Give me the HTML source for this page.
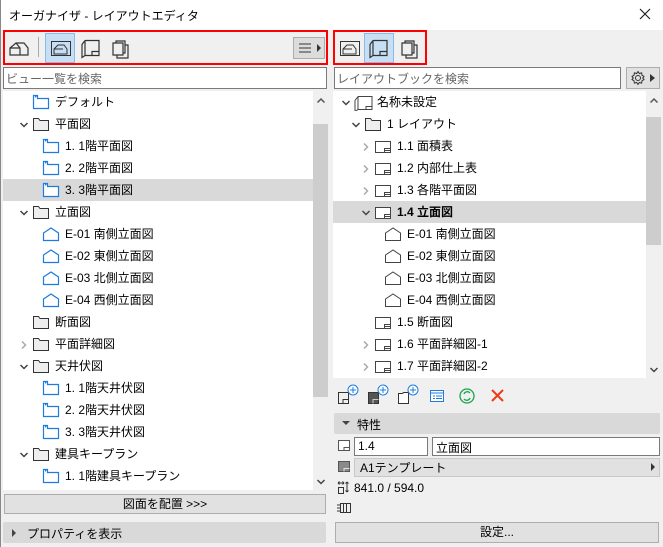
<!DOCTYPE html>
<html><head><meta charset="utf-8"><style>
*{box-sizing:border-box;margin:0;padding:0}
body{width:663px;height:547px;overflow:hidden;background:#f0f0f0;font-family:"Liberation Sans","Noto Sans CJK JP",sans-serif;font-size:12px;color:#000;position:relative}
.a{position:absolute}
.r{position:absolute;height:22px;line-height:22px;white-space:nowrap}
.r svg{position:absolute;top:3px}
.r span{position:absolute}
.sel{background:#d9d9d9}
.box{background:#fff;border:1px solid #7a7a7a}
.btn{background:#e1e1e1;border:1px solid #adadad;text-align:center}
</style></head><body>
<svg width="0" height="0" style="position:absolute">
<defs>
<symbol id="vw" viewBox="0 0 18 16"><path d="M1.5 1.5h4v3h11v10h-15z" fill="#fff" stroke="#1e7be0" stroke-width="1.2"/><path d="M3.5 3.5v-1h1" fill="none" stroke="#1e7be0" stroke-width="1"/></symbol>
<symbol id="fd" viewBox="0 0 18 16"><path d="M1.5 2.5h5l1.5 2h8.5v10h-15z" fill="#eee" stroke="#333" stroke-width="1"/></symbol>
<symbol id="el" viewBox="0 0 18 16"><path d="M1.5 7l7.5-5 7.5 5v7.5h-15z" fill="#fff" stroke="#1e7be0" stroke-width="1.2"/></symbol>
<symbol id="elg" viewBox="0 0 18 16"><path d="M1.5 7l7.5-5 7.5 5v7.5h-15z" fill="#fff" stroke="#444" stroke-width="1"/></symbol>
<symbol id="ly" viewBox="0 0 18 16"><rect x="1.5" y="3.5" width="15" height="11" fill="#fff" stroke="#444"/><path d="M10.5 14.5v-4h6M11 12.5h5" fill="none" stroke="#444"/></symbol>
<symbol id="dn" viewBox="0 0 10 10"><path d="M1.5 3l3.5 3.5 3.5-3.5" fill="none" stroke="#444" stroke-width="1.5"/></symbol>
<symbol id="rt" viewBox="0 0 10 10"><path d="M3 1.5l3.5 3.5-3.5 3.5" fill="none" stroke="#aaa" stroke-width="1.5"/></symbol>
<symbol id="up" viewBox="0 0 10 10"><path d="M1.5 6.5l3.5-3.5 3.5 3.5" fill="none" stroke="#555" stroke-width="1.5"/></symbol>
</defs></svg>

<!-- title -->
<div class="a" style="left:0;top:0;width:663px;height:30px;background:#fff"></div>
<div class="a" style="left:9px;top:7px;font-size:12px">オーガナイザ - レイアウトエディタ</div>
<svg class="a" style="left:639px;top:8px" width="12" height="12"><path d="M1 1l10 10M11 1L1 11" stroke="#222" stroke-width="1.2"/></svg>
<div class="a" style="left:0;top:0;width:1px;height:547px;background:#888"></div>

<!-- toolbars -->
<div class="a" style="left:3px;top:30px;width:325px;height:35px;border:2px solid #f00"></div>
<svg class="a" style="left:8px;top:38px" width="22" height="20"><path d="M2 17V10l6-5h8l4 5v7zM8 5l4 5v7M2 10h10" fill="none" stroke="#333" stroke-width="1.2"/></svg>
<div class="a" style="left:38px;top:37px;width:1px;height:20px;background:#aaa"></div>
<div class="a" style="left:45px;top:33px;width:30px;height:30px;background:#c6dff5;border:1px solid #8bbbe4"></div>
<svg class="a" style="left:50px;top:38px" width="22" height="20"><rect x="1.5" y="3.5" width="19" height="14" fill="none" stroke="#333"/><path d="M4 16V11l4-4h6l3 4v5zM4 11h9" fill="none" stroke="#333"/></svg>
<svg class="a" style="left:80px;top:37px" width="22" height="22"><path d="M5 3.5h14v15H5M5 3.5l-3 4v13l3-2M5 3.5v15M12 18.5v-4h7" fill="none" stroke="#333" stroke-width="1.2"/></svg>
<svg class="a" style="left:110px;top:37px" width="22" height="22"><path d="M3 4h10v12H3zM6 4V2h9v12h-2M15 6h3v13H7v-3" fill="none" stroke="#333" stroke-width="1.2" transform="translate(0,2)"/></svg>
<div class="a btn" style="left:293px;top:37px;width:32px;height:22px;background:#dcdcdc"></div>
<svg class="a" style="left:299px;top:42px" width="24" height="12"><path d="M0 2h12M0 6h12M0 10h12" stroke="#333"/><path d="M18 2l4 4-4 4z" fill="#333"/></svg>

<div class="a" style="left:333px;top:30px;width:94px;height:35px;border:2px solid #f00"></div>
<svg class="a" style="left:339px;top:38px" width="22" height="20"><rect x="1.5" y="3.5" width="19" height="14" fill="none" stroke="#333"/><path d="M4 16V11l4-4h6l3 4v5zM4 11h9" fill="none" stroke="#333"/></svg>
<div class="a" style="left:364px;top:33px;width:30px;height:30px;background:#c6dff5;border:1px solid #8bbbe4"></div>
<svg class="a" style="left:368px;top:37px" width="22" height="22"><path d="M5 3.5h14v15H5M5 3.5l-3 4v13l3-2M5 3.5v15M12 18.5v-4h7" fill="none" stroke="#333" stroke-width="1.2"/></svg>
<svg class="a" style="left:399px;top:37px" width="22" height="22"><path d="M3 4h10v12H3zM6 4V2h9v12h-2M15 6h3v13H7v-3" fill="none" stroke="#333" stroke-width="1.2" transform="translate(0,2)"/></svg>

<!-- search -->
<div class="a box" style="left:3px;top:67px;width:324px;height:22px"></div>
<div class="a" style="left:6px;top:70px;color:#666">ビュー一覧を検索</div>
<div class="a box" style="left:334px;top:67px;width:287px;height:22px"></div>
<div class="a" style="left:337px;top:70px;color:#666">レイアウトブックを検索</div>
<div class="a btn" style="left:626px;top:67px;width:34px;height:22px"></div>
<svg class="a" style="left:630px;top:70px" width="16" height="16"><circle cx="8" cy="8" r="2.5" fill="none" stroke="#333"/><path d="M8 1.5l1.3 2 2.3-.6.4 2.3 2 1.3-1.3 1.5 1.3 1.5-2 1.3-.4 2.3-2.3-.6L8 14.5l-1.3-2-2.3.6-.4-2.3-2-1.3L3.3 8 2 6.5l2-1.3.4-2.3 2.3.6z" fill="none" stroke="#333"/></svg>
<svg class="a" style="left:650px;top:74px" width="6" height="8"><path d="M0 0l5 4-5 4z" fill="#333"/></svg>

<!-- left tree -->
<div class="a" style="left:3px;top:91px;width:325px;height:399px;background:#fff"></div>
<div class="a" style="left:313px;top:91px;width:15px;height:399px;background:#f0f0f0"></div>
<div class="a" style="left:313px;top:124px;width:15px;height:273px;background:#cdcdcd"></div>
<svg class="a" style="left:316px;top:96px" width="10" height="10"><use href="#up"/></svg>
<svg class="a" style="left:316px;top:477px" width="10" height="10"><use href="#dn"/></svg>
<div class="r" style="left:3px;top:91px;width:310px"><svg style="left:29px" width="18" height="16"><use href="#vw"/></svg><span style="left:52px">デフォルト</span></div>
<div class="r" style="left:3px;top:113px;width:310px"><svg style="left:16px;top:7px" width="10" height="10"><use href="#dn"/></svg><svg style="left:29px" width="18" height="16"><use href="#fd"/></svg><span style="left:52px">平面図</span></div>
<div class="r" style="left:3px;top:135px;width:310px"><svg style="left:39px" width="18" height="16"><use href="#vw"/></svg><span style="left:62px">1. 1階平面図</span></div>
<div class="r" style="left:3px;top:157px;width:310px"><svg style="left:39px" width="18" height="16"><use href="#vw"/></svg><span style="left:62px">2. 2階平面図</span></div>
<div class="r sel" style="left:3px;top:179px;width:310px"><svg style="left:39px" width="18" height="16"><use href="#vw"/></svg><span style="left:62px">3. 3階平面図</span></div>
<div class="r" style="left:3px;top:201px;width:310px"><svg style="left:16px;top:7px" width="10" height="10"><use href="#dn"/></svg><svg style="left:29px" width="18" height="16"><use href="#fd"/></svg><span style="left:52px">立面図</span></div>
<div class="r" style="left:3px;top:223px;width:310px"><svg style="left:39px" width="18" height="16"><use href="#el"/></svg><span style="left:62px">E-01 南側立面図</span></div>
<div class="r" style="left:3px;top:245px;width:310px"><svg style="left:39px" width="18" height="16"><use href="#el"/></svg><span style="left:62px">E-02 東側立面図</span></div>
<div class="r" style="left:3px;top:267px;width:310px"><svg style="left:39px" width="18" height="16"><use href="#el"/></svg><span style="left:62px">E-03 北側立面図</span></div>
<div class="r" style="left:3px;top:289px;width:310px"><svg style="left:39px" width="18" height="16"><use href="#el"/></svg><span style="left:62px">E-04 西側立面図</span></div>
<div class="r" style="left:3px;top:311px;width:310px"><svg style="left:29px" width="18" height="16"><use href="#fd"/></svg><span style="left:52px">断面図</span></div>
<div class="r" style="left:3px;top:333px;width:310px"><svg style="left:16px;top:7px" width="10" height="10"><use href="#rt"/></svg><svg style="left:29px" width="18" height="16"><use href="#fd"/></svg><span style="left:52px">平面詳細図</span></div>
<div class="r" style="left:3px;top:355px;width:310px"><svg style="left:16px;top:7px" width="10" height="10"><use href="#dn"/></svg><svg style="left:29px" width="18" height="16"><use href="#fd"/></svg><span style="left:52px">天井伏図</span></div>
<div class="r" style="left:3px;top:377px;width:310px"><svg style="left:39px" width="18" height="16"><use href="#vw"/></svg><span style="left:62px">1. 1階天井伏図</span></div>
<div class="r" style="left:3px;top:399px;width:310px"><svg style="left:39px" width="18" height="16"><use href="#vw"/></svg><span style="left:62px">2. 2階天井伏図</span></div>
<div class="r" style="left:3px;top:421px;width:310px"><svg style="left:39px" width="18" height="16"><use href="#vw"/></svg><span style="left:62px">3. 3階天井伏図</span></div>
<div class="r" style="left:3px;top:443px;width:310px"><svg style="left:16px;top:7px" width="10" height="10"><use href="#dn"/></svg><svg style="left:29px" width="18" height="16"><use href="#fd"/></svg><span style="left:52px">建具キープラン</span></div>
<div class="r" style="left:3px;top:465px;width:310px;height:25px;overflow:hidden"><svg style="left:39px" width="18" height="16"><use href="#vw"/></svg><span style="left:62px">1. 1階建具キープラン</span></div>

<div class="a btn" style="left:4px;top:494px;width:322px;height:20px;line-height:18px">図面を配置 &gt;&gt;&gt;</div>
<div class="a" style="left:3px;top:522px;width:323px;height:21px;background:#d9d9d9;border-radius:2px"></div>
<svg class="a" style="left:12px;top:529px" width="5" height="8"><path d="M0 0l4 4-4 4z" fill="#444"/></svg>
<div class="a" style="left:27px;top:525px">プロパティを表示</div>

<!-- right tree -->
<div class="a" style="left:333px;top:91px;width:328px;height:287px;background:#fff"></div>
<div class="a" style="left:646px;top:91px;width:15px;height:287px;background:#f0f0f0"></div>
<div class="a" style="left:646px;top:117px;width:15px;height:128px;background:#cdcdcd"></div>
<svg class="a" style="left:649px;top:96px" width="10" height="10"><use href="#up"/></svg>
<svg class="a" style="left:649px;top:365px" width="10" height="10"><use href="#dn"/></svg>
<div class="r" style="left:333px;top:91px;width:313px"><svg style="left:8px;top:7px" width="10" height="10"><use href="#dn"/></svg><svg style="left:20px;top:2px" width="22" height="18"><path d="M5 3.5h14v13H5M5 3.5l-3 4v11l3-2M5 3.5v13M13 16.5v-3h6" fill="none" stroke="#444" stroke-width="1"/></svg><span style="left:44px">名称未設定</span></div>
<div class="r" style="left:333px;top:113px;width:313px"><svg style="left:18px;top:7px" width="10" height="10"><use href="#dn"/></svg><svg style="left:31px" width="18" height="16"><use href="#fd"/></svg><span style="left:54px">1 レイアウト</span></div>
<div class="r" style="left:333px;top:135px;width:313px"><svg style="left:28px;top:7px" width="10" height="10"><use href="#rt"/></svg><svg style="left:41px" width="18" height="16"><use href="#ly"/></svg><span style="left:64px">1.1 面積表</span></div>
<div class="r" style="left:333px;top:157px;width:313px"><svg style="left:28px;top:7px" width="10" height="10"><use href="#rt"/></svg><svg style="left:41px" width="18" height="16"><use href="#ly"/></svg><span style="left:64px">1.2 内部仕上表</span></div>
<div class="r" style="left:333px;top:179px;width:313px"><svg style="left:28px;top:7px" width="10" height="10"><use href="#rt"/></svg><svg style="left:41px" width="18" height="16"><use href="#ly"/></svg><span style="left:64px">1.3 各階平面図</span></div>
<div class="r sel" style="left:333px;top:201px;width:313px"><svg style="left:28px;top:7px" width="10" height="10"><use href="#dn"/></svg><svg style="left:41px" width="18" height="16"><use href="#ly"/></svg><span style="left:64px;font-weight:bold">1.4 立面図</span></div>
<div class="r" style="left:333px;top:223px;width:313px"><svg style="left:51px" width="18" height="16"><use href="#elg"/></svg><span style="left:74px">E-01 南側立面図</span></div>
<div class="r" style="left:333px;top:245px;width:313px"><svg style="left:51px" width="18" height="16"><use href="#elg"/></svg><span style="left:74px">E-02 東側立面図</span></div>
<div class="r" style="left:333px;top:267px;width:313px"><svg style="left:51px" width="18" height="16"><use href="#elg"/></svg><span style="left:74px">E-03 北側立面図</span></div>
<div class="r" style="left:333px;top:289px;width:313px"><svg style="left:51px" width="18" height="16"><use href="#elg"/></svg><span style="left:74px">E-04 西側立面図</span></div>
<div class="r" style="left:333px;top:311px;width:313px"><svg style="left:41px" width="18" height="16"><use href="#ly"/></svg><span style="left:64px">1.5 断面図</span></div>
<div class="r" style="left:333px;top:333px;width:313px"><svg style="left:28px;top:7px" width="10" height="10"><use href="#rt"/></svg><svg style="left:41px" width="18" height="16"><use href="#ly"/></svg><span style="left:64px">1.6 平面詳細図-1</span></div>
<div class="r" style="left:333px;top:355px;width:313px;height:23px;overflow:hidden"><svg style="left:28px;top:7px" width="10" height="10"><use href="#rt"/></svg><svg style="left:41px" width="18" height="16"><use href="#ly"/></svg><span style="left:64px">1.7 平面詳細図-2</span></div>

<!-- action icons -->
<svg class="a" style="left:337px;top:384px" width="190" height="22">
<g fill="none" stroke="#333"><path d="M1.5 8.5h10v11h-10zM6 19.5v-4h5.5"/></g><circle cx="16" cy="6" r="5" fill="#fff" stroke="#1e7be0"/><path d="M16 3v6M13 6h6" stroke="#1e7be0"/>
<g transform="translate(30,0)"><path d="M1.5 8.5h10v11h-10z" fill="#555" stroke="#333"/><path d="M6 19.5v-4h5.5" stroke="#ccc" fill="none"/><circle cx="16" cy="6" r="5" fill="#fff" stroke="#1e7be0"/><path d="M16 3v6M13 6h6" stroke="#1e7be0"/></g>
<g transform="translate(60,0)"><path d="M1.5 9.5h4l1-1h5v11h-10z" fill="#fff" stroke="#333"/><circle cx="16" cy="6" r="5" fill="#fff" stroke="#1e7be0"/><path d="M16 3v6M13 6h6" stroke="#1e7be0"/></g>
<g transform="translate(92,0)"><rect x="1.5" y="6.5" width="13" height="11" fill="#fff" stroke="#1e7be0"/><path d="M1.5 9h13M4 12h2M7 12h6M4 14.5h2M7 14.5h6" stroke="#1e7be0"/></g>
<g transform="translate(122,0)"><circle cx="8" cy="12" r="7" fill="none" stroke="#1aa34a" stroke-width="1.3"/><path d="M5 10a3.5 3.5 0 0 1 6-1M11 14a3.5 3.5 0 0 1-6 1" stroke="#1aa34a" fill="none" stroke-width="1.3"/></g>
<g transform="translate(152,0)"><path d="M3 6l11 11M14 6L3 17" stroke="#f03a17" stroke-width="2"/></g>
</svg>

<!-- properties -->
<div class="a" style="left:334px;top:413px;width:326px;height:21px;background:#d9d9d9;border-radius:2px"></div>
<svg class="a" style="left:342px;top:421px" width="8" height="5"><path d="M0 0h8l-4 4z" fill="#444"/></svg>
<div class="a" style="left:357px;top:416px">特性</div>
<svg class="a" style="left:337px;top:439px" width="14" height="14"><rect x="1.5" y="1.5" width="11" height="10" fill="#fff" stroke="#555"/><path d="M7 11.5v-3h5.5" fill="none" stroke="#555"/></svg>
<div class="a box" style="left:354px;top:437px;width:74px;height:19px"></div>
<div class="a" style="left:358px;top:439px">1.4</div>
<div class="a box" style="left:432px;top:437px;width:228px;height:19px"></div>
<div class="a" style="left:436px;top:439px">立面図</div>
<svg class="a" style="left:337px;top:460px" width="14" height="14"><rect x="1.5" y="1.5" width="11" height="10" fill="#8a8a8a" stroke="#555"/><path d="M7 11.5v-3h5.5" fill="none" stroke="#ddd"/></svg>
<div class="a" style="left:354px;top:458px;width:306px;height:19px;background:#e1e1e1;border:1px solid #c8c8c8"></div>
<div class="a" style="left:360px;top:459px">A1テンプレート</div>
<svg class="a" style="left:651px;top:463px" width="5" height="8"><path d="M0 0l4 4-4 4z" fill="#333"/></svg>
<svg class="a" style="left:337px;top:480px" width="14" height="16"><path d="M1 3h6M1 3l1.5-1.5M1 3l1.5 1.5M7 3L5.5 1.5M7 3L5.5 4.5M10 2v10M10 2l-1.5 1.5M10 2l1.5 1.5M10 12l-1.5-1.5M10 12l1.5-1.5" fill="none" stroke="#333"/><rect x="1.5" y="7.5" width="5" height="6" fill="none" stroke="#333"/></svg>
<div class="a" style="left:354px;top:481px">841.0 / 594.0</div>
<svg class="a" style="left:336px;top:502px" width="16" height="12"><rect x="4.5" y="1.5" width="10" height="9" fill="none" stroke="#333"/><path d="M7.5 1.5v9M10.5 1.5v9M1 3h3M1 6h3M1 9h3" stroke="#333"/></svg>
<div class="a btn" style="left:335px;top:522px;width:324px;height:21px;line-height:19px">設定...</div>
</body></html>
